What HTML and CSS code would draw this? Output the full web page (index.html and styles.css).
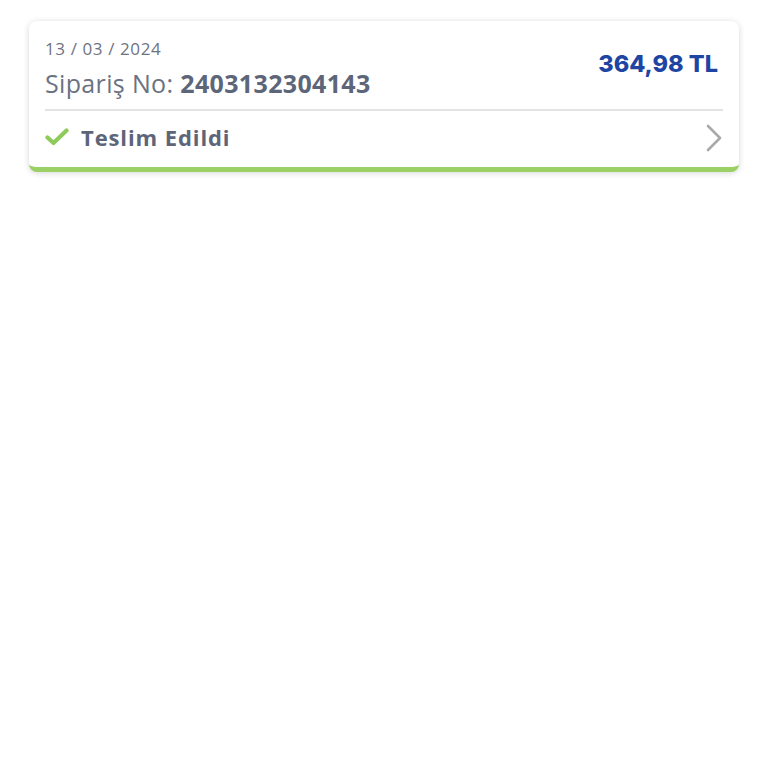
FILE: index.html
```html
<!DOCTYPE html>
<html lang="tr">
<head>
<meta charset="utf-8">
<link rel="stylesheet" href="styles.css">
</head>
<body>
<div class="page">
  <div class="card">
    <div class="head">
      <div class="info">
        <div class="date">13 / 03 / 2024</div>
        <div class="order">Sipariş No: <b>2403132304143</b></div>
      </div>
      <div class="price">364,98 TL</div>
    </div>
    <div class="status">
      <svg class="check" width="24" height="18" viewBox="0 0 24 18"><path d="M2.5 9.5 L8.5 15 L21.5 2.5" fill="none" stroke="#8fcb5a" stroke-width="4.2" stroke-linecap="round" stroke-linejoin="round"/></svg>
      <span class="label">Teslim Edildi</span>
      <svg class="chev" width="18" height="28" viewBox="0 0 18 28"><path d="M3 2 L15 14 L3 26" fill="none" stroke="#a9a9a9" stroke-width="2.6" stroke-linecap="round" stroke-linejoin="round"/></svg>
    </div>
  </div>
</div>
</body>
</html>
```
FILE: styles.css
```css
html, body { margin: 0; padding: 0; background: #fff; }
.page { padding: 21px 29px; }
.card {
  background: #fff;
  border-radius: 8px;
  box-shadow: 0 1px 6px rgba(0,0,0,0.16);
  border-bottom: 5px solid #9bd064;
  padding: 0 16px;
  font-family: "Open Sans", sans-serif;
}
.head {
  display: flex;
  justify-content: space-between;
  padding: 16px 0 9px;
  border-bottom: 2px solid #e3e3e3;
}
.date { font-size: 17px; letter-spacing: 0.6px; color: #6e7381; line-height: 24px; }
.order { font-size: 25px; letter-spacing: 0.35px; color: #6a7282; line-height: 34px; margin-top: 5px; }
.order b { color: #5d6679; font-weight: 700; }
.price {
  font-family: Inter, sans-serif;
  font-weight: 800;
  font-size: 23.5px;
  color: #1f45a3;
  margin-top: 12px;
  margin-right: 5px;
}
.status {
  display: flex;
  align-items: center;
  height: 52px;
  padding-bottom: 4px;
}
.check { margin-right: 12px; }
.label { font-size: 22px; letter-spacing: 0.9px; font-weight: 700; color: #5d6679; flex: 1; }
.chev { margin-top: 2px; }
```
